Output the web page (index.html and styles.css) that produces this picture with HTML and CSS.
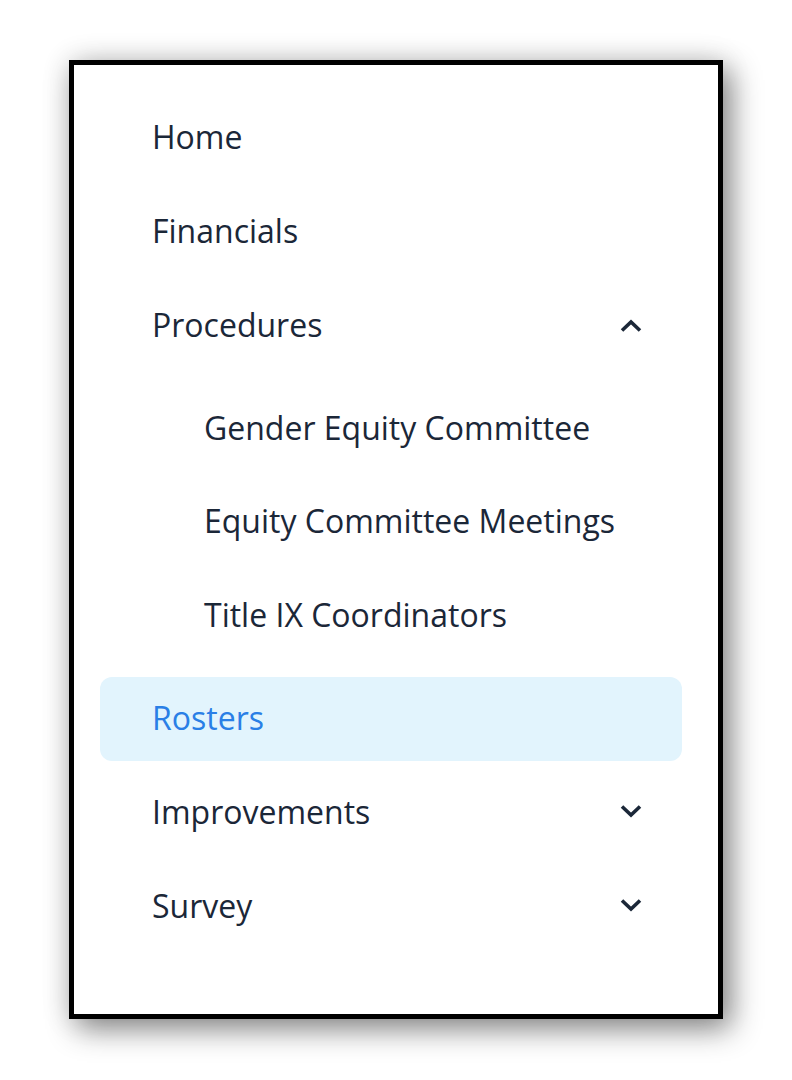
FILE: index.html
```html
<!DOCTYPE html>
<html>
<head lang="en">
    <meta charset="UTF-8">
    <title>Menu</title>
    <link rel="stylesheet" href="styles.css">
</head>
<body>
<div class="panel">
    <ul class="menu">
        <li><a href="javascript:;" class="item">Home</a></li>
        <li><a href="javascript:;" class="item">Financials</a></li>
        <li>
            <a href="javascript:;" class="item">Procedures
                <svg class="chev up" width="24" height="14" viewBox="0 0 24 14"><polyline points="3,11.5 12,3 21,11.5"/></svg>
            </a>
            <ul class="submenu">
                <li><a href="javascript:;" class="item sub">Gender Equity Committee</a></li>
                <li><a href="javascript:;" class="item sub">Equity Committee Meetings</a></li>
                <li><a href="javascript:;" class="item sub">Title IX Coordinators</a></li>
            </ul>
        </li>
        <li><a href="javascript:;" class="item active">Rosters</a></li>
        <li>
            <a href="javascript:;" class="item">Improvements
                <svg class="chev" width="24" height="14" viewBox="0 0 24 14"><polyline points="3,2.5 12,11 21,2.5"/></svg>
            </a>
        </li>
        <li>
            <a href="javascript:;" class="item">Survey
                <svg class="chev" width="24" height="14" viewBox="0 0 24 14"><polyline points="3,2.5 12,11 21,2.5"/></svg>
            </a>
        </li>
    </ul>
</div>
</body>
</html>
```

FILE: styles.css
```css
* {
    margin: 0;
    padding: 0;
    box-sizing: border-box;
}

body {
    background: #fff;
    min-height: 1080px;
    padding: 60px 0 61px 69px;
    font-family: "Open Sans", "Liberation Sans", sans-serif;
}

.panel {
    width: 654px;
    height: 959px;
    border: 5px solid #000;
    background: #fff;
    padding: 31px 36px 0 26px;
    box-shadow: 8px 10px 28px rgba(0, 0, 0, 0.45), 0 0 28px rgba(0, 0, 0, 0.12);
}

.menu,
.submenu {
    list-style: none;
    display: flex;
    flex-direction: column;
}

.menu {
    gap: 10px;
}

.submenu {
    gap: 9.5px;
    padding: 19px 0 9px;
}

.item {
    display: flex;
    align-items: center;
    justify-content: space-between;
    height: 84px;
    padding: 0 39px 4px 52px;
    border-radius: 12px;
    font-size: 32px;
    color: #1b2738;
    text-decoration: none;
}

.item.sub {
    padding-left: 104px;
}

.item.active {
    background: #e2f4fd;
    color: #2a7fe6;
}

.chev {
    display: block;
    margin-top: -1px;
    fill: none;
    stroke: #1b2738;
    stroke-width: 3.6;
}

.chev.up {
    margin-top: 4px;
}
```
